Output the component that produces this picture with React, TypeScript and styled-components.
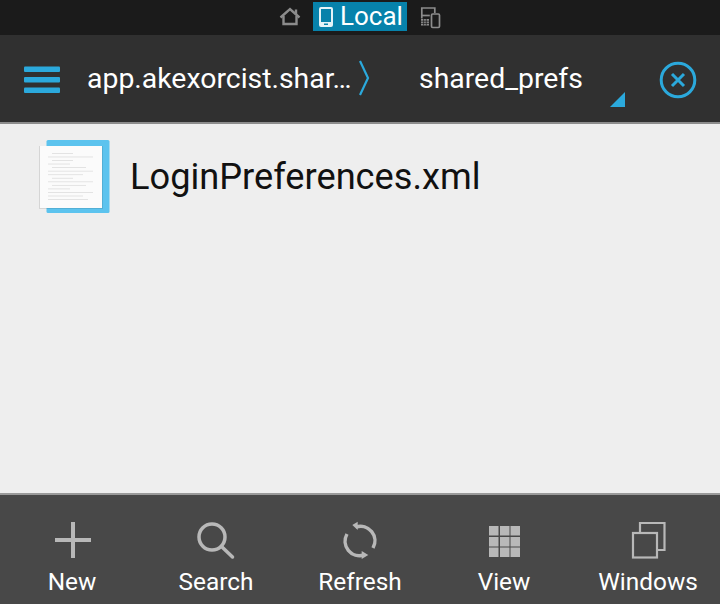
import React from "react";
import styled, { createGlobalStyle } from "styled-components";

const Global = createGlobalStyle`
  html, body { margin: 0; padding: 0; background: #eeeeee; }
  body { font-family: Roboto, "Liberation Sans", sans-serif; }
`;

const Screen = styled.div`
  width: 720px;
  height: 604px;
  display: flex;
  flex-direction: column;
  overflow: hidden;
  background: #eeeeee;
`;

const StatusBar = styled.div`
  height: 35px;
  flex: none;
  background: #1b1b1b;
  display: flex;
  align-items: flex-start;
  padding-left: 278px;
  box-sizing: border-box;
`;

const StatusIcon = styled.svg`
  display: block;
  flex: none;
  margin-top: 6px;
`;

const LocalTab = styled.div`
  width: 94px;
  height: 29px;
  margin: 2px 13px 0 11px;
  background: #0782ab;
  color: #ffffff;
  display: flex;
  align-items: center;
  font-size: 26px;
  line-height: 29px;
  box-sizing: border-box;
  padding-left: 6px;
  gap: 7px;
`;

const Toolbar = styled.div`
  height: 89px;
  flex: none;
  background: #303030;
  display: flex;
  align-items: center;
  box-sizing: border-box;
  padding: 2px 0 0 24px;
  color: #ffffff;
  font-size: 28.4px;
  border-bottom: 2px solid #8c8c8c;
  position: relative;
`;

const Crumb = styled.div<{ $width: number; $left: number }>`
  width: ${(p) => p.$width}px;
  margin-left: ${(p) => p.$left}px;
  flex: none;
  white-space: nowrap;
  line-height: 36px;
  margin-top: -2px;
`;

const ToolIcon = styled.svg<{ $left?: number; $lift?: number }>`
  display: block;
  flex: none;
  margin-left: ${(p) => p.$left ?? 0}px;
  margin-top: ${(p) => -(p.$lift ?? 0)}px;
`;

const Corner = styled.svg`
  position: absolute;
  left: 610px;
  top: 57px;
`;

const Content = styled.div`
  flex: 1;
  min-height: 0;
  background: #eeeeee;
  padding: 16px 0 0 38px;
  box-sizing: border-box;
`;

const FileRow = styled.div`
  display: flex;
  align-items: center;
  gap: 19px;
`;

const FileName = styled.div`
  font-size: 36.2px;
  line-height: 44px;
  color: #111111;
  margin-top: -1px;
`;

const BottomBar = styled.div`
  height: 111px;
  flex: none;
  background: #484848;
  border-top: 2px solid #9a9a9a;
  box-sizing: border-box;
  display: grid;
  grid-template-columns: repeat(5, 144px);
`;

const Action = styled.div`
  display: flex;
  flex-direction: column;
  align-items: center;
  padding-top: 26px;
  color: #ffffff;
  font-size: 24.4px;
`;

const ActionIcon = styled.svg`
  display: block;
  width: 40px;
  height: 40px;
`;

const ActionLabel = styled.div`
  line-height: 28px;
  margin-top: 7px;
  white-space: nowrap;
`;

const GREY = "#b8b8b8";
const BLUE = "#2ba9dc";
const STATUS = "#8c8c8c";

const docLines: [number, number][] = [
  [14, 35], [10, 55], [14, 35], [10, 32], [14, 48], [10, 55], [10, 45],
  [14, 35], [10, 55], [14, 48], [10, 32], [10, 55], [10, 45], [10, 50],
];

function FileIcon() {
  return (
    <svg width="73" height="74" viewBox="0 0 73 74">
      <rect x="8.5" y="0" width="63" height="73" rx="1.5" fill="#5cc3ee" />
      <rect x="1" y="6" width="64" height="63" fill="#000000" opacity="0.1" />
      <rect x="2" y="6" width="62" height="62" fill="#fbfbfb" />
      {docLines.map(([x, w], i) => (
        <rect key={i} x={x} y={13 + i * 3.55} width={w - x} height="0.8" fill="#dedede" />
      ))}
    </svg>
  );
}

export default function App() {
  return (
    <Screen>
      <Global />
      <StatusBar>
        <StatusIcon width="24" height="22" viewBox="0 0 24 22" fill="none" stroke={STATUS} strokeWidth="2.4">
          <path d="M2.5 11.5 12 3l9.5 8.5" />
          <path d="M5.5 10v8h13v-8" />
          <path d="M18 3.5v5" />
        </StatusIcon>
        <LocalTab>
          <svg width="14" height="20" viewBox="0 0 14 20">
            <path d="M2 0h10a2 2 0 0 1 2 2v16a2 2 0 0 1-2 2H2a2 2 0 0 1-2-2V2a2 2 0 0 1 2-2zm0 2v13h10V2z" fill="#e4f3f8" fillRule="evenodd" />
            <rect x="5" y="16.5" width="4" height="1.5" fill="#0782ab" />
          </svg>
          <span>Local</span>
        </LocalTab>
        <StatusIcon width="22" height="23" viewBox="0 0 22 23" fill="none" stroke={STATUS} strokeWidth="1.7">
          <path d="M1.8 12.5V2h13v5" />
          <path d="M1.8 9.5h8" />
          <rect x="1" y="13" width="8" height="6.5" fill={STATUS} stroke="none" />
          <path d="M1 15.2h8M1 17.4h8M3.6 13v6.5M6.3 13v6.5" stroke="#1b1b1b" strokeWidth="0.7" />
          <rect x="11.5" y="8" width="8" height="13.5" rx="1.2" />
        </StatusIcon>
      </StatusBar>
      <Toolbar>
        <ToolIcon width="36" height="28" viewBox="0 0 36 28" fill={BLUE}>
          <rect x="0" y="0.5" width="36" height="5.5" rx="1" />
          <rect x="0" y="11" width="36" height="5.5" rx="1" />
          <rect x="0" y="21.5" width="36" height="5.5" rx="1" />
        </ToolIcon>
        <Crumb $width={265} $left={27}>app.akexorcist.shar…</Crumb>
        <ToolIcon $left={6} $lift={3} width="12" height="36" viewBox="0 0 12 36" fill="none" stroke={BLUE} strokeWidth="2.2">
          <path d="M2 1l8 17-8 17" />
        </ToolIcon>
        <Crumb $width={164} $left={49}>shared_prefs</Crumb>
        <ToolIcon $left={76} width="38" height="38" viewBox="0 0 38 38" fill="none" stroke={BLUE}>
          <circle cx="19" cy="19" r="16.8" strokeWidth="3" />
          <path d="M13 13l12 12M25 13 13 25" strokeWidth="3" />
        </ToolIcon>
        <Corner width="15" height="15" viewBox="0 0 15 15">
          <path d="M15 0v15H0z" fill={BLUE} />
        </Corner>
      </Toolbar>
      <Content>
        <FileRow>
          <FileIcon />
          <FileName>LoginPreferences.xml</FileName>
        </FileRow>
      </Content>
      <BottomBar>
        <Action>
          <ActionIcon viewBox="0 0 40 40" fill={GREY}>
            <rect x="19" y="1" width="4" height="36" />
            <rect x="3" y="17" width="36" height="4" />
          </ActionIcon>
          <ActionLabel>New</ActionLabel>
        </Action>
        <Action>
          <ActionIcon viewBox="0 0 40 40" fill="none" stroke={GREY} strokeWidth="3.5">
            <circle cx="16" cy="16" r="13" />
            <path d="M25.5 25.5l11 10.5" strokeLinecap="round" />
          </ActionIcon>
          <ActionLabel>Search</ActionLabel>
        </Action>
        <Action>
          <ActionIcon viewBox="0 0 40 40" fill="none" stroke={GREY} strokeWidth="3.5">
            <path d="M16 6A14.5 14.5 0 0 1 33 27" />
            <path d="M24 34A14.5 14.5 0 0 1 7 13" />
            <path d="M12.3 4l5.4-3.3V9z" fill={GREY} stroke="none" />
            <path d="M28.3 34l-6.6-4v8z" fill={GREY} stroke="none" />
          </ActionIcon>
          <ActionLabel>Refresh</ActionLabel>
        </Action>
        <Action>
          <ActionIcon viewBox="0 0 40 40" fill={GREY}>
            {[5, 16, 26.5].flatMap((y) =>
              [5, 16, 26.5].map((x) => <rect key={`${x}-${y}`} x={x} y={y} width="9.5" height="9.5" />)
            )}
          </ActionIcon>
          <ActionLabel>View</ActionLabel>
        </Action>
        <Action>
          <ActionIcon viewBox="0 0 40 40" fill="none" stroke={GREY} strokeWidth="2.2">
            <rect x="5" y="12" width="24" height="24.5" />
            <path d="M12 11V2h24.5v27H30" />
          </ActionIcon>
          <ActionLabel>Windows</ActionLabel>
        </Action>
      </BottomBar>
    </Screen>
  );
}
